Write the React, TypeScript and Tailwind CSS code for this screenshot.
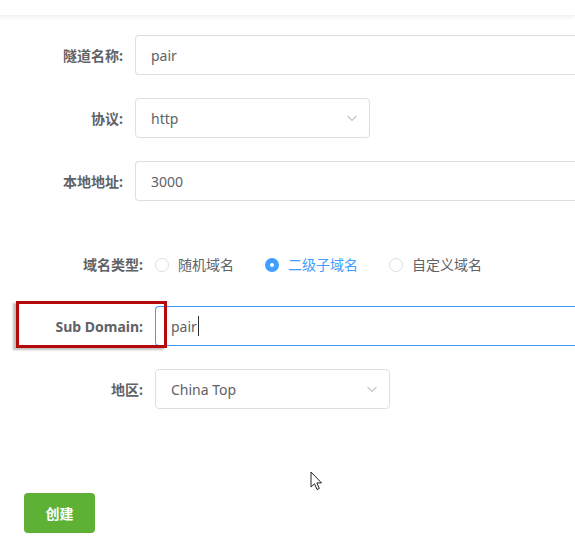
import React from "react";

const font = { fontFamily: '"Noto Sans", "Noto Sans CJK SC", sans-serif' };

function Chevron() {
  return (
    <svg width="14" height="14" viewBox="0 0 14 14" fill="none" className="text-[#c0c4cc]">
      <path d="M2.5 5 L7 9.5 L11.5 5" stroke="currentColor" strokeWidth="1.1" />
    </svg>
  );
}

function Label({ w, children }: { w: string; children: React.ReactNode }) {
  return (
    <label className={`${w} shrink-0 pr-3 text-right text-[14px] font-bold text-[#606266]`}>{children}</label>
  );
}

function Radio({ checked, label }: { checked?: boolean; label: string }) {
  return (
    <span className="flex items-center gap-[9px]">
      {checked ? (
        <span className="grid h-[14px] w-[14px] place-items-center rounded-full bg-[#409eff]">
          <span className="h-[4px] w-[4px] rounded-full bg-white" />
        </span>
      ) : (
        <span className="h-[14px] w-[14px] rounded-full border border-[#dcdfe6] bg-white" />
      )}
      <span className={`text-[14px] ${checked ? "text-[#409eff]" : "text-[#606266]"}`}>{label}</span>
    </span>
  );
}

export default function App() {
  return (
    <div style={font} className="relative h-[552px] w-[575px] overflow-hidden bg-white">
      <div className="h-[15px] bg-white shadow-[0_2px_4px_rgba(0,0,0,0.07)]" />

      {/* basic fields */}
      <div className="mt-[20px] flex flex-col gap-[23px]">
        <div className="flex items-center">
          <Label w="w-[135px]">隧道名称:</Label>
          <div className="flex h-[40px] flex-1 items-center rounded-l-[4px] border border-r-0 border-[#dcdfe6] px-[15px] text-[14px] text-[#606266]">
            pair
          </div>
        </div>
        <div className="flex items-center">
          <Label w="w-[135px]">协议:</Label>
          <div className="flex h-[40px] w-[235px] items-center justify-between rounded-[4px] border border-[#dcdfe6] pl-[15px] pr-[10px] text-[14px] text-[#606266]">
            http
            <Chevron />
          </div>
        </div>
        <div className="flex items-center">
          <Label w="w-[135px]">本地地址:</Label>
          <div className="flex h-[40px] flex-1 items-center rounded-l-[4px] border border-r-0 border-[#dcdfe6] px-[15px] text-[14px] text-[#606266]">
            3000
          </div>
        </div>
      </div>

      {/* domain settings */}
      <div className="mt-[53px] flex items-center">
        <Label w="w-[155px]">域名类型:</Label>
        <div className="flex items-center gap-[31px]">
          <Radio label="随机域名" />
          <Radio checked label="二级子域名" />
          <Radio label="自定义域名" />
        </div>
      </div>

      <div className="relative mt-[31px] flex items-center">
        <Label w="w-[155px]">Sub Domain:</Label>
        <div className="flex h-[40px] flex-1 items-center rounded-l-[4px] border border-r-0 border-[#409eff] px-[15px] text-[14px] text-[#606266]">
          pair<span className="ml-[1px] h-[20px] w-[1px] bg-[#303133]" />
        </div>
        <div className="absolute left-[16px] top-[-5px] h-[47px] w-[151px] border-[3px] border-[#b40a0a] shadow-[-3px_2px_2px_rgba(0,0,0,0.25)]" />
      </div>

      <div className="mt-[23px] flex items-center">
        <Label w="w-[155px]">地区:</Label>
        <div className="flex h-[40px] w-[235px] items-center justify-between rounded-[4px] border border-[#dcdfe6] pl-[15px] pr-[10px] text-[14px] text-[#606266]">
          China Top
          <Chevron />
        </div>
      </div>

      <button className="ml-[24px] mt-[84px] h-[40px] w-[71px] rounded-[4px] bg-[#5fb136] text-[14px] font-bold text-white">
        创建
      </button>

      {/* mouse pointer */}
      <svg className="absolute left-[310px] top-[471px]" width="16" height="22" viewBox="0 0 16 22">
        <path
          d="M1 1 L1 16 L4.5 12.8 L7 18.5 L9.3 17.5 L6.9 11.9 L11.5 11.9 Z"
          fill="white"
          stroke="#222"
          strokeWidth="1"
          strokeLinejoin="round"
        />
      </svg>
    </div>
  );
}
